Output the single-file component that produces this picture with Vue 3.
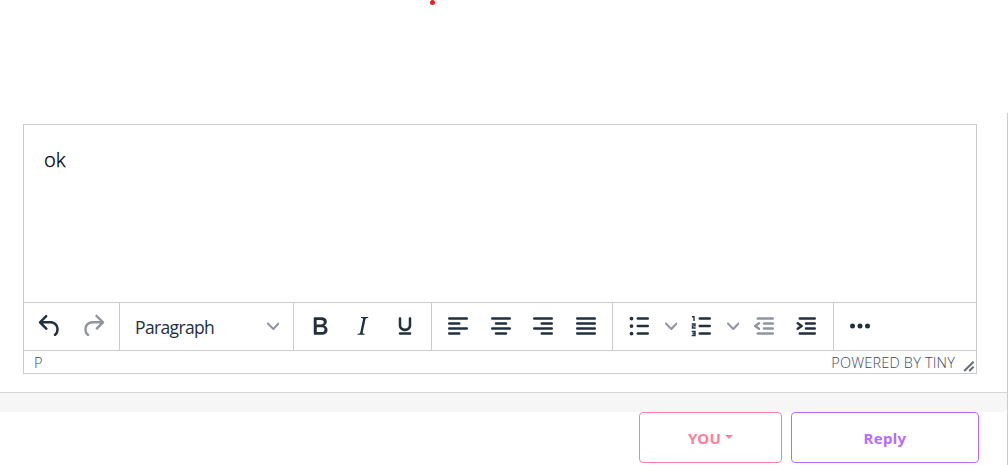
<script setup>
const line = (x1, x2, y) => `M${x1 + 1} ${y}H${x2 - 1}`
const undo = 'M6.4 8H12c3.7 0 6.2 2 6.8 5.1.6 2.7-.4 5.6-2.3 6.8a1 1 0 0 1-1-1.8c1.1-.6 1.8-2.7 1.4-4.6-.5-2.1-2.1-3.5-4.9-3.5H6.4l3.3 3.3a1 1 0 1 1-1.4 1.4l-5-5a1 1 0 0 1 0-1.4l5-5a1 1 0 0 1 1.4 1.4L6.4 8z'
const redo = 'M17.6 10H12c-2.8 0-4.4 1.4-4.9 3.5-.4 2 .3 4 1.4 4.6a1 1 0 1 1-1 1.8c-2-1.2-2.9-4.1-2.3-6.8.6-3 3-5.1 6.8-5.1h5.6l-3.3-3.3a1 1 0 1 1 1.4-1.4l5 5a1 1 0 0 1 0 1.4l-5 5a1 1 0 0 1-1.4-1.4l3.3-3.3z'
const bold = 'M7.8 19c-.3 0-.5 0-.6-.2l-.2-.5V5.7c0-.2 0-.4.2-.5l.6-.2h5c1.5 0 2.7.3 3.5 1 .7.6 1.1 1.4 1.1 2.5a3 3 0 0 1-.6 1.9c-.4.6-1 1-1.6 1.2.4.1.9.3 1.3.6s.8.7 1 1.2c.4.4.5 1 .5 1.6 0 1.3-.4 2.3-1.3 3-.8.7-2.1 1-3.8 1H7.8zm5-8.3c.6 0 1.2-.1 1.6-.5.4-.3.6-.7.6-1.3 0-1.1-.8-1.7-2.3-1.7H9.3v3.5h3.4zm.5 6c.7 0 1.3-.1 1.7-.4.4-.4.6-.9.6-1.5s-.2-1-.7-1.4c-.4-.3-1-.4-2-.4H9.4v3.8h4z'
const italic = 'M16.2 4.7l-.1.9h-.3c-.6 0-1 0-1.4.3-.3.3-.4.6-.5 1.1l-2.1 9.8v.6c0 .5.4.8 1.4.8h.2l-.2.8H7.5l.2-.8h.2c1.1 0 1.8-.5 2-1.5l2-9.8.1-.5c0-.6-.4-.8-1.4-.8h-.3l.2-.9h5.7z'
const underline = 'M16 5c.6 0 1 .4 1 1v5.5a4 4 0 0 1-.4 1.8l-1 1.4a5.3 5.3 0 0 1-5.5 1 5 5 0 0 1-1.6-1c-.5-.4-.8-.9-1.1-1.4a4 4 0 0 1-.4-1.8V6c0-.6.4-1 1-1s1 .4 1 1v5.5c0 .3 0 .6.2 1l.6.7a3.3 3.3 0 0 0 2.2.8 3.4 3.4 0 0 0 2.2-.8c.3-.2.4-.5.6-.8l.2-.9V6c0-.6.4-1 1-1zM8 17h8c.6 0 1 .4 1 1s-.4 1-1 1H8a1 1 0 0 1 0-2z'
const chevron = 'M8.7 2.2c.3-.3.8-.3 1 0 .4.4.4.9 0 1.2L5.7 7.8c-.3.3-.9.3-1.2 0L.2 3.4a.8.8 0 0 1 0-1.2c.3-.3.8-.3 1.1 0L5 6l3.7-3.8z'
const listLines = line(10, 20, 6) + line(10, 20, 12) + line(10, 20, 18)
const indentLines = line(6, 20, 6) + line(11, 20, 10) + line(11, 20, 14) + line(6, 20, 18)
const numerals = 'M4.8 4.6H6.4V8M4.6 10.4H7.2V11.9H5.2V13.6H7.7M4.6 16.4H7.2V19.6H4.6M5.2 18H7.2'

const history = [{ name: 'Undo', d: undo }, { name: 'Redo', d: redo, off: true }]
const formats = [{ name: 'Bold', d: bold }, { name: 'Italic', d: italic }, { name: 'Underline', d: underline }]
const aligns = [
  { name: 'Align left', d: line(4, 20, 6) + line(4, 14, 10) + line(4, 20, 14) + line(4, 14, 18) },
  { name: 'Align center', d: line(4, 20, 6) + line(7, 17, 10) + line(4, 20, 14) + line(7, 17, 18) },
  { name: 'Align right', d: line(4, 20, 6) + line(10, 20, 10) + line(4, 20, 14) + line(10, 20, 18) },
  { name: 'Justify', d: line(4, 20, 6) + line(4, 20, 10) + line(4, 20, 14) + line(4, 20, 18) }
]
</script>

<template>
  <div class="page">
    <header class="top"><span class="dot"></span></header>
    <main class="panel">
      <section class="editor">
        <div class="content">ok</div>
        <div class="toolbar">
          <div class="group">
            <button v-for="b in history" :key="b.name" class="tool" :class="{ off: b.off }" :aria-label="b.name">
              <svg class="icon" viewBox="0 0 24 24"><path :d="b.d" /></svg>
            </button>
          </div>
          <div class="group format">
            <span class="format-name">Paragraph</span>
            <svg class="chevron" viewBox="0 0 10 10"><path :d="chevron" /></svg>
          </div>
          <div class="group">
            <button v-for="b in formats" :key="b.name" class="tool" :aria-label="b.name">
              <svg class="icon" viewBox="0 0 24 24"><path fill-rule="evenodd" :d="b.d" /></svg>
            </button>
          </div>
          <div class="group">
            <button v-for="b in aligns" :key="b.name" class="tool" :aria-label="b.name">
              <svg class="icon" viewBox="0 0 24 24"><path class="stroke" :d="b.d" /></svg>
            </button>
          </div>
          <div class="group lists">
            <button class="tool split" aria-label="Bullet list">
              <svg class="icon" viewBox="0 0 24 24">
                <circle cx="6" cy="6" r="1.5" /><circle cx="6" cy="12" r="1.5" /><circle cx="6" cy="18" r="1.5" />
                <path class="stroke" :d="listLines" />
              </svg>
              <svg class="chevron" viewBox="0 0 10 10"><path :d="chevron" /></svg>
            </button>
            <button class="tool split numbered" aria-label="Numbered list">
              <svg class="icon" viewBox="0 0 24 24">
                <path class="numerals" :d="numerals" />
                <path class="stroke" :d="listLines" />
              </svg>
              <svg class="chevron" viewBox="0 0 10 10"><path :d="chevron" /></svg>
            </button>
            <button class="tool off" aria-label="Decrease indent">
              <svg class="icon" viewBox="0 0 24 24"><path class="stroke" :d="indentLines" /><path class="stroke" d="M8 9.8L4.9 12L8 14.2" /></svg>
            </button>
            <button class="tool" aria-label="Increase indent">
              <svg class="icon" viewBox="0 0 24 24"><path class="stroke" :d="indentLines" /><path class="stroke" d="M5.4 9.8L8.5 12L5.4 14.2" /></svg>
            </button>
          </div>
          <div class="group last">
            <button class="tool" aria-label="More">
              <svg class="icon" viewBox="0 0 24 24"><circle cx="6" cy="12" r="2" /><circle cx="12" cy="12" r="2" /><circle cx="18" cy="12" r="2" /></svg>
            </button>
          </div>
        </div>
        <footer class="status">
          <span class="path">P</span>
          <span class="brand">POWERED BY TINY</span>
          <svg class="grip" viewBox="0 0 12 12"><path d="M1.2 11L10.6 1.7M6.2 11L10.6 6.7" /></svg>
        </footer>
      </section>
      <div class="band"></div>
      <div class="actions">
        <button class="action you"><span>YOU</span><span class="caret"></span></button>
        <button class="action reply"><span>Reply</span></button>
      </div>
    </main>
  </div>
</template>

<style>
body { margin: 0; background: #fff; overflow: hidden; }
</style>

<style scoped>
.page { width: 1008px; height: 465px; display: flex; flex-direction: column; overflow: hidden; font-family: "Open Sans", "Noto Sans", sans-serif; }
.page * { box-sizing: border-box; }
.top { height: 113px; flex: none; }
.dot { display: block; width: 5px; height: 5px; margin-left: 429.5px; border-radius: 50%; background: #ed1c24; }
.panel { flex: 1; border-right: 1px solid #ccc; padding-top: 11px; }
.editor { width: 954px; height: 250px; margin-left: 23px; border: 1px solid #ccc; display: flex; flex-direction: column; }
.content { height: 177px; flex: none; padding: 21px 20px; font: 300 20px/28px "Noto Sans", sans-serif; color: #000; -webkit-text-stroke: .25px #000; }
.toolbar { height: 48px; flex: none; display: flex; border-top: 1px solid #ccc; }
.group { display: flex; align-items: center; width: 138px; padding: 0 0 1px 5px; border-right: 1px solid #ccc; flex: none; }
.group:first-child { width: 96px; }
.group:nth-child(4) { width: 181px; }
.group.format { width: 174px; padding: 0 14px 1px 15px; justify-content: space-between; }
.group.lists { width: 221px; }
.group.last { border: 0; }
.format-name { font-size: 17.5px; line-height: 24px; color: #222f3e; transform: translateY(1px); letter-spacing: -.65px; }
.tool { width: 42.5px; height: 42px; padding: 0 0 0 6.25px; border: 0; background: none; display: flex; align-items: center; flex: none; color: #222f3e; }
.split { width: 62.25px; }
.numbered { padding-left: 5.75px; }
.off { color: #9095a0; }
.icon { width: 30px; height: 30px; flex: none; fill: currentColor; }
.split .chevron { margin-left: 10.25px; }
.numbered .chevron { margin-left: 10.75px; }
.chevron { width: 12.5px; height: 12.5px; flex: none; fill: #9095a0; }
.stroke { fill: none; stroke: currentColor; stroke-width: 2; stroke-linecap: round; stroke-linejoin: round; }
.numerals { fill: none; stroke: currentColor; stroke-width: 1.1; }
.status { height: 23px; flex: none; border-top: 1px solid #ccc; display: flex; align-items: center; padding: 0 1px 0 10px; font-size: 14.5px; font-weight: 300; line-height: 20px; color: #3c4858; }
.path, .brand { transform: translateY(1px); }
.brand { margin-left: auto; letter-spacing: .18px; }
.grip { width: 12px; height: 12px; margin: 7px 0 0 8px; fill: none; stroke: #646d78; stroke-width: 2; }
.band { height: 20px; margin-top: 18px; background: #f6f6f6; border-top: 1px solid #d5d5d5; border-bottom-right-radius: 5px; }
.actions { display: flex; justify-content: flex-end; gap: 9px; padding-right: 28px; }
.action { height: 51px; padding: 0; background: #fff; border: 1px solid; border-radius: 4px; display: flex; align-items: center; justify-content: center; font: 700 15px/22px "Noto Sans", sans-serif; letter-spacing: .3px; }
.you { width: 143px; color: #ff7f9b; gap: 4px; }
.reply { width: 188px; color: #b76cff; }
.caret { border: 4px solid transparent; border-top-color: currentColor; border-bottom: 0; margin-top: -2px; }
</style>
